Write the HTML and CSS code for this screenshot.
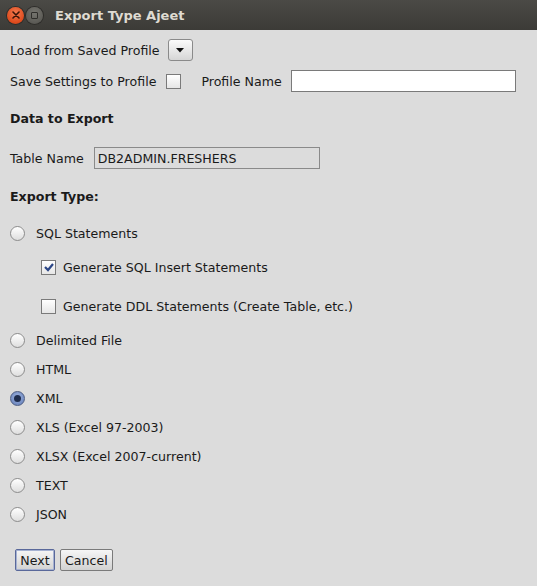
FILE: index.html
```html
<!DOCTYPE html>
<html>
<head>
<meta charset="utf-8">
<link rel="stylesheet" href="styles.css">
</head>
<body>
<div class="window">
  <div class="titlebar">
    <span class="tb-btn tb-close"><svg width="8" height="8" viewBox="0 0 8 8"><path d="M1 1L7 7M7 1L1 7" stroke="#3a1408" stroke-width="1.6" stroke-linecap="round"/></svg></span>
    <span class="tb-btn tb-max"><span class="tb-square"></span></span>
    <span class="title">Export Type Ajeet</span>
  </div>
  <div class="content">
    <div class="row r1">
      <span class="label">Load from Saved Profile</span>
      <span class="combo"><svg width="8" height="5" viewBox="0 0 8 5"><path d="M0 0H8L4 4.5Z" fill="#111"/></svg></span>
    </div>
    <div class="row r2">
      <span class="label">Save Settings to Profile</span>
      <span class="check"></span>
      <span class="label pn">Profile Name</span>
      <span class="field white"></span>
    </div>
    <div class="heading h1">Data to Export</div>
    <div class="row r3">
      <span class="label">Table Name</span>
      <span class="field grey">DB2ADMIN.FRESHERS</span>
    </div>
    <div class="heading h2">Export Type:</div>
    <div class="opt o-sql"><span class="radio"></span><span>SQL Statements</span></div>
    <div class="opt sub o-ins"><span class="check checked"><svg width="12" height="10" viewBox="0 0 12 10"><path d="M2 5L5 8L10 2" fill="none" stroke="#2b4686" stroke-width="2.2"/></svg></span><span>Generate SQL Insert Statements</span></div>
    <div class="opt sub o-ddl"><span class="check"></span><span>Generate DDL Statements (Create Table, etc.)</span></div>
    <div class="opt o-del"><span class="radio"></span><span>Delimited File</span></div>
    <div class="opt o-n"><span class="radio"></span><span>HTML</span></div>
    <div class="opt o-n"><span class="radio on"><span class="dot"></span></span><span>XML</span></div>
    <div class="opt o-n"><span class="radio"></span><span>XLS (Excel 97-2003)</span></div>
    <div class="opt o-n"><span class="radio"></span><span>XLSX (Excel 2007-current)</span></div>
    <div class="opt o-n"><span class="radio"></span><span>TEXT</span></div>
    <div class="opt o-n"><span class="radio"></span><span>JSON</span></div>
    <div class="buttons">
      <span class="btn focused">Next</span>
      <span class="btn">Cancel</span>
    </div>
  </div>
</div>
</body>
</html>
```
FILE: styles.css
```css
* { box-sizing: border-box; }
html, body { margin: 0; padding: 0; }
body {
  width: 537px;
  height: 586px;
  overflow: hidden;
  background: #dcdcdc;
  font-family: "DejaVu Sans", sans-serif;
  font-size: 12.6px;
  color: #1a1a1a;
}
.window { width: 537px; height: 586px; display: flex; flex-direction: column; }
.titlebar {
  height: 30px;
  flex: none;
  background: linear-gradient(#4b4a46, #3c3b37);
  display: flex;
  align-items: center;
  padding-left: 7px;
}
.tb-btn {
  width: 17px; height: 17px; border-radius: 50%;
  display: flex; align-items: center; justify-content: center;
}
.tb-close {
  background: radial-gradient(circle at 50% 35%, #f47a4f, #de4a1c 70%, #b83a14);
  box-shadow: 0 0 0 1px #2e2d2a;
}
.tb-max {
  margin-left: 2px;
  background: radial-gradient(circle at 50% 35%, #76756f, #5c5b56 70%, #4a4945);
  box-shadow: 0 0 0 1px #2e2d2a;
}
.tb-square { width: 7px; height: 7px; border: 1.5px solid #2f2e2b; border-radius: 1px; }
.title {
  margin-left: 12px;
  font-family: "DejaVu Sans", sans-serif;
  font-weight: bold;
  font-size: 13px;
  color: #dfdbd2;
  margin-top: 1px;
}
.content { padding: 0 10px; display: flex; flex-direction: column; }
.row { display: flex; align-items: center; height: 22px; }
.r1 { margin-top: 9px; }
.r2 { margin-top: 9px; }
.r3 { margin-top: 20px; }
.label { white-space: nowrap; }
.combo {
  margin-left: 8px;
  width: 25px; height: 22px;
  border: 1px solid #8a8a8a; border-radius: 3px;
  background: linear-gradient(#fbfbfb, #d6d6d6);
  display: flex; align-items: center; justify-content: center;
  padding-top: 1px;
}
.check {
  width: 15px; height: 15px;
  border: 1px solid #7a7a7a;
  background: linear-gradient(#ffffff, #e6e6e6);
  display: inline-flex; align-items: center; justify-content: center;
  flex: none;
}
.r2 .check { margin-left: 10px; }
.pn { margin-left: 20px; }
.r2 .field { margin-left: 9px; flex: 1; margin-right: 11px; }
.field { height: 22px; border: 1px solid #7a7a7a; display: flex; align-items: center; padding-left: 3px; }
.white { background: #fff; }
.grey { background: #dcdcdc; margin-left: 10px; width: 226px; border-color: #8a8a8a; }
.heading { font-weight: bold; height: 16px; line-height: 16px; }
.h1 { margin-top: 19px; }
.h2 { margin-top: 20px; }
.opt { display: flex; align-items: center; height: 20px; }
.opt .radio { margin-right: 11px; }
.opt .check { margin-right: 7px; }
.sub { padding-left: 31px; }
.o-sql { margin-top: 18px; }
.o-ins { margin-top: 14px; }
.o-ddl { margin-top: 19px; }
.o-del { margin-top: 14px; }
.o-n { margin-top: 9px; }
.radio {
  width: 15px; height: 15px; border-radius: 50%;
  border: 1px solid #8c8c8c;
  background: linear-gradient(#ffffff, #dedede);
  display: inline-flex; align-items: center; justify-content: center;
  flex: none;
}
.radio.on {
  border-color: #4d5d82;
  background: radial-gradient(circle at 50% 40%, #9fb3dd, #5f7bb8);
}
.dot { width: 7px; height: 7px; border-radius: 50%; background: #1e2c4c; }
.buttons { display: flex; margin-top: 25px; padding-left: 5px; gap: 5px; }
.btn {
  height: 22px; padding: 0 4px;
  border: 1px solid #7a7a7a; border-radius: 2px;
  background: linear-gradient(#f6f6f6, #d2d2d2);
  display: flex; align-items: center;
}
.btn.focused { border-color: #59689a; box-shadow: inset 0 0 0 1px #a6b2d2; width: 40px; justify-content: center; }
```
